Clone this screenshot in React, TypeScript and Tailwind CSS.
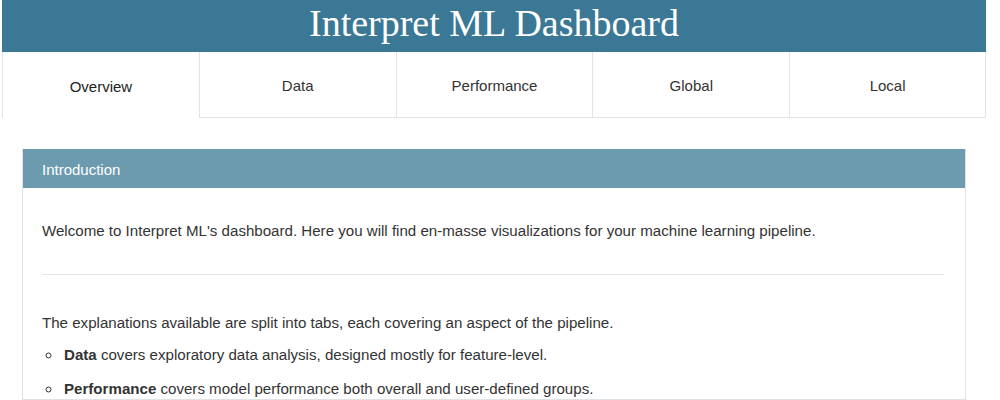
import React from "react";

const tabs = ["Overview", "Data", "Performance", "Global", "Local"];

export default function App() {
  return (
    <div className="w-[1000px] h-[400px] overflow-hidden bg-white font-['Liberation_Sans',Arial,sans-serif] text-[#333]">
      <div className="ml-[2px] w-[984px]">
        <header className="h-[52px] bg-[#3a7895] flex items-center justify-center">
          <h1 className="font-['Liberation_Serif','Times_New_Roman',serif] text-white text-[38px] leading-none -mt-[6px]">
            Interpret ML Dashboard
          </h1>
        </header>
        <nav className="grid grid-cols-5 h-[66px]">
          {tabs.map((t, i) => (
            <div
              key={t}
              className={
                i === 0
                  ? "flex items-center justify-center text-[15px] text-[#222] border-l border-[#dfe4e8] pt-[4px]"
                  : "flex items-center justify-center text-[15px] text-[#333] border-l border-b border-[#dfe4e8] pt-[3px] last:border-r"
              }
            >
              {t}
            </div>
          ))}
        </nav>
      </div>

      <section className="mt-[31px] ml-[22px] w-[944px] border border-[#dde2e6] border-t-0">
        <div className="h-[39px] bg-[#6c9bb0] flex items-center px-[19px] pt-[3px] text-white text-[15px]">
          Introduction
        </div>
        <div className="pl-[19px] pr-[21px] pt-[33px] text-[15.1px] leading-[20px]">
          <p>
            Welcome to Interpret ML's dashboard. Here you will find en-masse visualizations for your machine
            learning pipeline.
          </p>
          <hr className="mt-[33px] border-t border-[#e3e6e8]" />
          <p className="mt-[38px]">The explanations available are split into tabs, each covering an aspect of the pipeline.</p>
          <ul className="mt-[12px] list-[circle] pl-[20px] space-y-[14px]">
            <li className="pl-[2px]">
              <b>Data</b> covers exploratory data analysis, designed mostly for feature-level.
            </li>
            <li className="pl-[2px]">
              <b>Performance</b> covers model performance both overall and user-defined groups.
            </li>
          </ul>
        </div>
      </section>
    </div>
  );
}
